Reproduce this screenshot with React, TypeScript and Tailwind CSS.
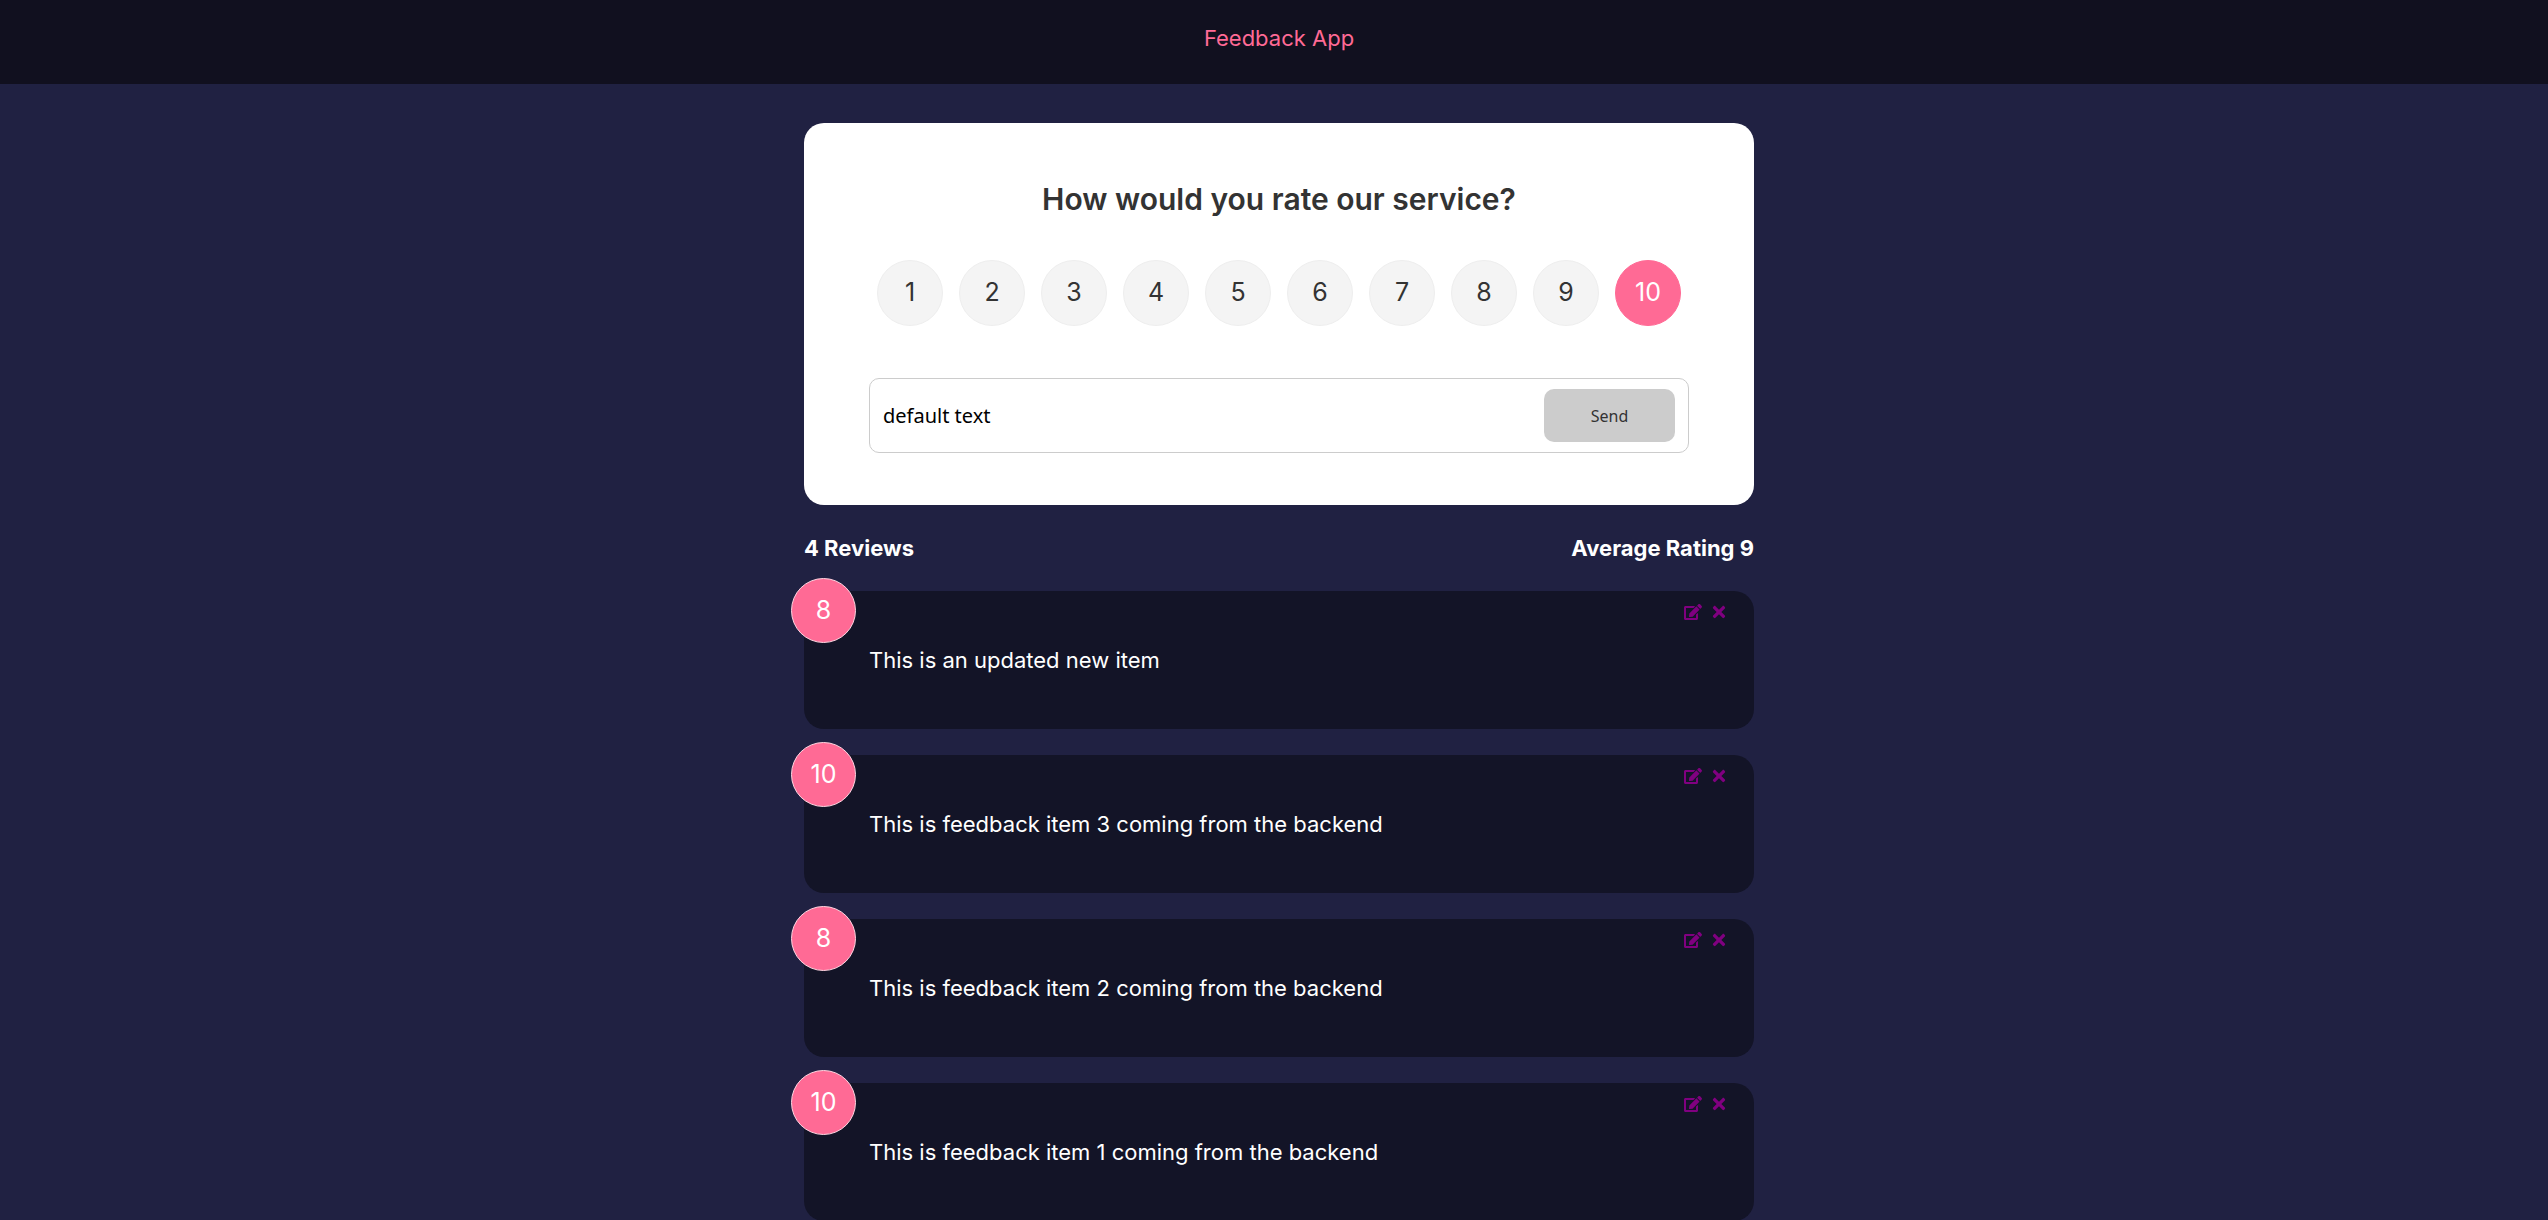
import { useState } from "react";
import { FaEdit, FaTimes } from "react-icons/fa";

const ratings = [1, 2, 3, 4, 5, 6, 7, 8, 9, 10];

const reviews = [
  { id: 4, rating: 8, text: "This is an updated new item" },
  { id: 3, rating: 10, text: "This is feedback item 3 coming from the backend" },
  { id: 2, rating: 8, text: "This is feedback item 2 coming from the backend" },
  { id: 1, rating: 10, text: "This is feedback item 1 coming from the backend" },
];

function Header() {
  return (
    <header className="h-[84px] bg-[#11101f] pt-[22px] pl-[10px] text-center">
      <a href="#" className="text-[22px] leading-8 text-[#ff6a95]">
        Feedback App
      </a>
    </header>
  );
}

function RatingSelect({ value, onChange }: { value: number; onChange: (n: number) => void }) {
  return (
    <fieldset aria-label="Rating" className="mt-[42px] flex justify-around">
      {ratings.map((n) => (
        <label
          key={n}
          className="flex size-[66px] cursor-pointer items-center justify-center rounded-full border border-[#eeeeee] bg-[#f4f4f4] text-[25px] text-[#333333] has-checked:border-[#ff6a95] has-checked:bg-[#ff6a95] has-checked:text-white"
        >
          <input
            type="radio"
            name="rating"
            value={n}
            checked={value === n}
            onChange={() => onChange(n)}
            className="sr-only"
          />
          {n}
        </label>
      ))}
    </fieldset>
  );
}

function FeedbackForm() {
  const [rating, setRating] = useState(10);
  const [text, setText] = useState("default text");
  return (
    <form
      onSubmit={(e) => e.preventDefault()}
      className="rounded-[20px] bg-white px-[65px] pt-[57px] pb-[52px]"
    >
      <h2 className="text-center text-[30px] leading-[38px] font-semibold text-[#333333]">
        How would you rate our service?
      </h2>
      <RatingSelect value={rating} onChange={setRating} />
      <div className="mt-[52px] flex h-[75px] items-center rounded-[10px] border border-[#cccccc] px-[13px]">
        <input
          type="text"
          aria-label="Review"
          value={text}
          onChange={(e) => setText(e.target.value)}
          className="min-w-0 grow font-['Noto_Sans',sans-serif] text-[20px] leading-8 text-black outline-none"
        />
        <button
          type="submit"
          className="h-[53px] w-[131px] rounded-[10px] bg-[#cccccc] font-['Noto_Sans',sans-serif] text-base text-[#333333]"
        >
          Send
        </button>
      </div>
    </form>
  );
}

function ReviewCard({ rating, text }: { rating: number; text: string }) {
  return (
    <li className="relative h-[138px] rounded-[20px] bg-[#131427] px-[65px] pt-[52px]">
      <div className="absolute -top-[13px] -left-[13px] flex size-[65px] items-center justify-center rounded-full border border-[#ffd5e1] bg-[#ff6a95] text-[25px] text-white">
        {rating}
      </div>
      <div className="absolute top-3 right-[26px] flex gap-2 text-[18px] text-[#800080]">
        <button type="button" aria-label="Edit review">
          <FaEdit />
        </button>
        <button type="button" aria-label="Delete review">
          <FaTimes />
        </button>
      </div>
      <p className="text-[22px] leading-[34px] text-white">{text}</p>
    </li>
  );
}

export default function App() {
  return (
    <div className="min-h-screen bg-[#202142] font-['Inter',sans-serif]">
      <Header />
      <main className="pt-[39px] pl-[10px]">
        <div className="mx-auto max-w-[950px]">
          <FeedbackForm />
          <div className="my-[26px] flex justify-between text-[22px] leading-[34px] font-bold text-white">
            <h4>4 Reviews</h4>
            <h4>Average Rating 9</h4>
          </div>
          <ul className="flex flex-col gap-[26px]">
            {reviews.map((r) => (
              <ReviewCard key={r.id} rating={r.rating} text={r.text} />
            ))}
          </ul>
        </div>
      </main>
    </div>
  );
}
